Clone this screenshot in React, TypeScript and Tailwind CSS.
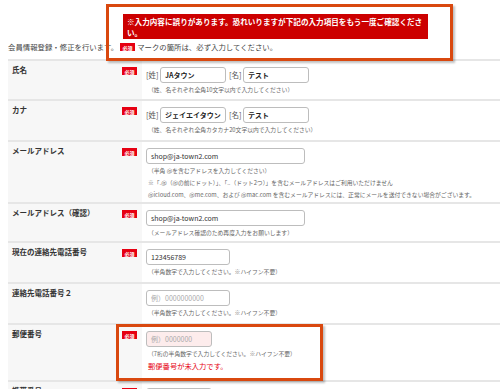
const font = { fontFamily: '"Noto Sans CJK JP", "Noto Sans", sans-serif' };

function Badge() {
  return (
    <span className="inline-flex h-[8px] w-[15px] items-center justify-center bg-[#e60012] text-[5px] font-bold leading-none text-white">
      必須
    </span>
  );
}

function Field({
  value,
  placeholder,
  width,
  bold,
  error,
}: {
  value?: string;
  placeholder?: string;
  width: string;
  bold?: boolean;
  error?: boolean;
}) {
  return (
    <div
      className={`flex h-[16px] items-center rounded-[3px] border border-[#bdbdbd] px-[4px] text-[7px] leading-none ${width} ${
        error ? "bg-[#fdecec]" : "bg-white"
      } ${bold ? "font-bold text-[#222]" : "text-[#333]"}`}
    >
      {value ?? <span className="font-normal text-[#aaa]">{placeholder}</span>}
    </div>
  );
}

function Hint({ children }: { children: React.ReactNode }) {
  return <p className="text-[5.8px] leading-[12px] text-[#666] whitespace-nowrap">{children}</p>;
}

function Row({
  label,
  required,
  height,
  children,
}: {
  label: string;
  required?: boolean;
  height: string;
  children: React.ReactNode;
}) {
  return (
    <div className={`flex border-t-2 border-[#e6e6e6] ${height}`}>
      <div className="flex w-[134px] shrink-0 items-start justify-between bg-[#f7f7f7] pl-[4px] pr-[5px] pt-[4px]">
        <span className="text-[7.5px] font-bold leading-[10px] text-[#333]">{label}</span>
        {required && (
          <div className="flex pt-[2px]">
            <Badge />
          </div>
        )}
      </div>
      <div className="flex-1 bg-white pl-[4px] pt-[6px]">{children}</div>
    </div>
  );
}

function NameInputs({ sei, mei }: { sei: string; mei: string }) {
  return (
    <div className="flex items-center text-[7.5px] text-[#555]">
      <span className="w-[14px]">[姓]</span>
      <Field value={sei} width="w-[66px]" bold />
      <span className="ml-[3px] w-[14px]">[名]</span>
      <Field value={mei} width="w-[66px]" bold />
    </div>
  );
}

export default function App() {
  return (
    <div className="relative h-[389px] w-[500px] overflow-hidden bg-white" style={font}>
      <div className="pl-[123px] pt-[14px]">
        <div className="h-[25px] w-[305px] bg-[#cc0000] px-[4px] pt-[2px] text-[7.6px] font-bold leading-[11px] text-white">
          ※入力内容に誤りがあります。恐れいりますが下記の入力項目をもう一度ご確認ください。
        </div>
      </div>
      <div className="ml-2 mt-[3px] flex h-[10px] items-center text-[7.4px] leading-none text-[#444]">
        <span>会員情報登録・修正を行います。</span>
        <span className="mx-[2px] flex">
          <Badge />
        </span>
        <span>マークの箇所は、必ず入力してください。</span>
      </div>

      <div className="ml-2 mt-[7px] w-[492px]">
        <Row label="氏名" required height="h-[40px]">
          <NameInputs sei="JAタウン" mei="テスト" />
          <div className="pl-[2px] pt-px">
            <Hint>（姓、名それぞれ全角10文字以内で入力してください）</Hint>
          </div>
        </Row>
        <Row label="カナ" required height="h-[41px]">
          <NameInputs sei="ジェイエイタウン" mei="テスト" />
          <div className="pl-[2px] pt-px">
            <Hint>（姓、名それぞれ全角カタカナ20文字以内で入力してください）</Hint>
          </div>
        </Row>
        <Row label="メールアドレス" required height="h-[62px]">
          <Field value="shop@ja-town2.com" width="w-[159px]" />
          <div className="pl-[2px] pt-px">
            <Hint>（半角 @を含むアドレスを入力してください）</Hint>
            <Hint>※「.@（@の前にドット）」、「..（ドット2つ）」を含むメールアドレスはご利用いただけません</Hint>
            <Hint>@icloud.com、@me.com、および @mac.com を含むメールアドレスには、正常にメールを送付できない場合がございます。</Hint>
          </div>
        </Row>
        <Row label="メールアドレス（確認）" required height="h-[39px]">
          <Field value="shop@ja-town2.com" width="w-[159px]" />
          <div className="pl-[2px] pt-px">
            <Hint>（メールアドレス確認のため再度入力をお願いします）</Hint>
          </div>
        </Row>
        <Row label="現在の連絡先電話番号" required height="h-[41px]">
          <Field value="123456789" width="w-[84px]" />
          <div className="pl-[2px] pt-px">
            <Hint>（半角数字で入力してください。※ハイフン不要）</Hint>
          </div>
        </Row>
        <Row label="連絡先電話番号２" height="h-[41px]">
          <Field placeholder="例）0000000000" width="w-[84px]" />
          <div className="pl-[2px] pt-px">
            <Hint>（半角数字で入力してください。※ハイフン不要）</Hint>
          </div>
        </Row>
        <Row label="郵便番号" required height="h-[57px]">
          <Field placeholder="例）0000000" width="w-[66px]" error />
          <div className="pl-[2px] pt-px">
            <Hint>（7桁の半角数字で入力してください。※ハイフン不要）</Hint>
            <p className="mt-[1px] text-[7.3px] leading-[10px] text-[#e60012]">郵便番号が未入力です。</p>
          </div>
        </Row>
        <Row label="携帯番号" required height="h-[40px]">
          <Field value="" width="w-[66px]" />
        </Row>
      </div>

      <div className="pointer-events-none absolute left-[106px] top-[4px] h-[57px] w-[347px] border-[3px] border-[#d9480f] shadow-[2px_2px_2px_rgba(0,0,0,0.25)]" />
      <div className="pointer-events-none absolute left-[116px] top-[324px] h-[57px] w-[207px] border-[3px] border-[#d9480f] shadow-[2px_2px_2px_rgba(0,0,0,0.25)]" />
    </div>
  );
}
